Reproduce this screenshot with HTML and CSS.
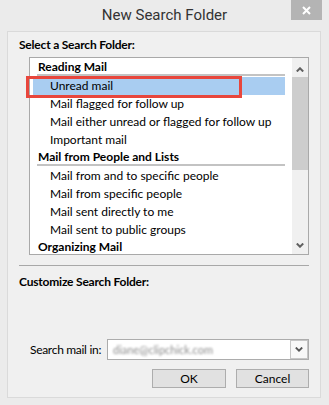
FILE: index.html
```html
<!DOCTYPE html>
<html>
<head>
<meta charset="utf-8">
<link rel="stylesheet" href="styles.css">
</head>
<body>
<div class="window">
  <div class="titlebar">
    <div></div>
    <div class="title">New Search Folder</div>
    <div class="close-cell">
      <div class="close">
        <svg width="9" height="9" viewBox="0 0 9 9"><path d="M1 1L8 8M8 1L1 8" stroke="#fff" stroke-width="2" fill="none"/></svg>
      </div>
    </div>
  </div>
  <div class="panel">
    <div class="section-label">Select a Search Folder:</div>
    <div class="listbox-wrap">
      <div class="listbox">
        <div class="list-content">
          <div class="group">Reading Mail</div>
          <div class="item selected">Unread mail</div>
          <div class="item">Mail flagged for follow up</div>
          <div class="item">Mail either unread or flagged for follow up</div>
          <div class="item">Important mail</div>
          <div class="group">Mail from People and Lists</div>
          <div class="item">Mail from and to specific people</div>
          <div class="item">Mail from specific people</div>
          <div class="item">Mail sent directly to me</div>
          <div class="item">Mail sent to public groups</div>
          <div class="group">Organizing Mail</div>
        </div>
        <div class="scrollbar">
          <div class="sb-btn sb-up">
            <svg width="8" height="5" viewBox="0 0 8 5"><polyline points="0.8,4.5 4,1.3 7.2,4.5" stroke="#606060" stroke-width="2" fill="none"/></svg>
          </div>
          <div class="sb-thumb"></div>
          <div class="sb-track"></div>
          <div class="sb-btn sb-down">
            <svg width="8" height="5" viewBox="0 0 8 5"><polyline points="0.8,0.5 4,3.7 7.2,0.5" stroke="#606060" stroke-width="2" fill="none"/></svg>
          </div>
        </div>
      </div>
      <div class="annotation"></div>
    </div>
    <div class="separator"></div>
    <div class="section-label custom-label">Customize Search Folder:</div>
    <div class="search-row">
      <span class="search-label">Search mail in:</span>
      <div class="dropdown">
        <span class="dropdown-value">diane@clipchick.com</span>
        <div class="dropdown-btn">
          <svg width="8" height="5" viewBox="0 0 8 5"><polyline points="0.8,0.5 4,3.7 7.2,0.5" stroke="#555" stroke-width="1.8" fill="none"/></svg>
        </div>
      </div>
    </div>
    <div class="buttons">
      <div class="btn btn-ok">OK</div>
      <div class="btn btn-cancel">Cancel</div>
    </div>
  </div>
</div>
</body>
</html>
```

FILE: styles.css
```css
* { box-sizing: border-box; }
html, body { margin: 0; padding: 0; }
body {
  font-family: Lato, "Liberation Sans", sans-serif;
  font-size: 12px;
  color: #000;
  background: #ebebeb;
}
.window {
  width: 329px;
  height: 405px;
  background: #ebebeb;
  display: flex;
  flex-direction: column;
}
.titlebar {
  height: 31px;
  display: grid;
  grid-template-columns: 1fr auto 1fr;
}
.title {
  font-family: Roboto, "Liberation Sans", sans-serif;
  font-size: 15px;
  line-height: 20px;
  padding-top: 5px;
  color: #333;
}
.close-cell {
  display: flex;
  justify-content: flex-end;
  align-items: flex-start;
  padding-right: 7px;
}
.close {
  width: 31px;
  height: 20px;
  background: #b4b4b4;
  display: flex;
  align-items: center;
  justify-content: center;
  padding-top: 1px;
}
.panel {
  margin: 0 8px 0 7px;
  height: 367px;
  border: 1px solid #dadada;
  background: #f0f0f0;
  padding: 5px 11px 0 11px;
}
.section-label {
  font-weight: bold;
  letter-spacing: -0.2px;
  line-height: 16px;
}
.listbox-wrap {
  position: relative;
  margin: 4px 0 0 10px;
  width: 280px;
  height: 198px;
}
.listbox {
  width: 280px;
  height: 198px;
  border: 1px solid #a9a9a9;
  background: #fff;
  display: flex;
  overflow: hidden;
}
.list-content {
  width: 262px;
  padding-top: 1px;
  overflow: hidden;
}
.group {
  margin: 0 7px 1px 7px;
  height: 17px;
  line-height: 15px;
  padding-left: 1px;
  border-bottom: 2px solid #c3c3c3;
  font-weight: bold;
  white-space: nowrap;
}
.item {
  margin: 0 7px 0 3px;
  height: 18px;
  line-height: 18px;
  padding-left: 17px;
  white-space: nowrap;
}
.item.selected { background: #a9cdf1; }
.scrollbar {
  width: 16px;
  background: #f0f0f0;
  display: flex;
  flex-direction: column;
}
.sb-btn {
  display: flex;
  justify-content: center;
}
.sb-up { height: 19px; padding-top: 9px; }
.sb-thumb { height: 93px; background: #cdcdcd; }
.sb-track { flex: 1; }
.sb-down { height: 17px; padding-top: 6px; }
.annotation {
  position: absolute;
  left: -3px;
  top: 19px;
  width: 216px;
  height: 22px;
  border: 3px solid #e8463c;
}
.separator {
  margin-top: 10px;
  width: 290px;
  height: 1px;
  background: #a8a8a8;
}
.custom-label { margin-top: 8px; }
.search-row {
  margin-top: 49px;
  width: 290px;
  display: flex;
  align-items: center;
}
.search-label {
  margin-left: 11px;
  letter-spacing: -0.3px;
  white-space: nowrap;
}
.dropdown {
  margin-left: auto;
  width: 202px;
  height: 21px;
  border: 1px solid #acacac;
  background: #fff;
  display: flex;
  align-items: center;
}
.dropdown-value {
  padding-left: 5px;
  flex: 1;
  font-size: 11px;
  color: #8c8c8c;
  filter: blur(1.3px);
}
.dropdown-btn {
  width: 18px;
  height: 19px;
  border: 1px solid #c6c6c6;
  background: #f8f8f8;
  display: flex;
  align-items: center;
  justify-content: center;
}
.buttons {
  margin-top: 9px;
  width: 290px;
  display: flex;
  justify-content: flex-end;
  gap: 10px;
}
.btn {
  height: 19px;
  border: 1px solid #adadad;
  background: #e1e1e1;
  text-align: center;
  line-height: 17px;
}
.btn-ok { width: 74px; }
.btn-cancel { width: 73px; }
```
